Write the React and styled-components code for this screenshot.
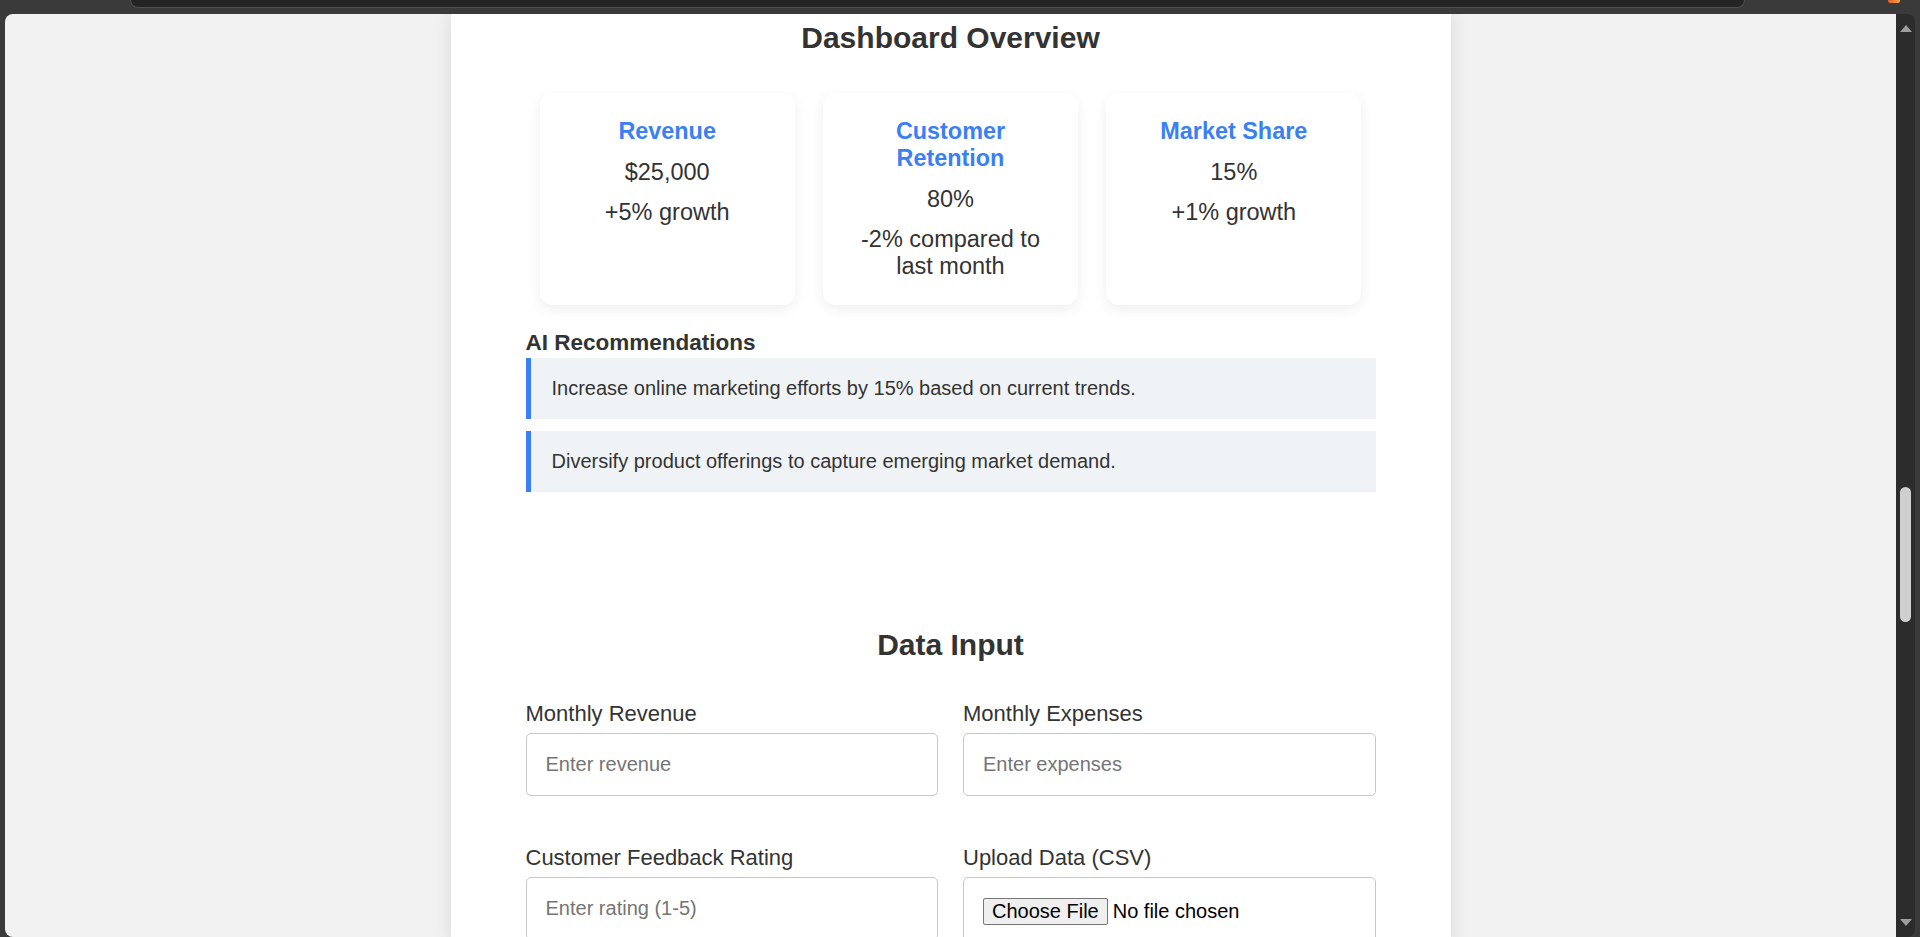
import styled, { createGlobalStyle } from 'styled-components';

const GlobalStyle = createGlobalStyle`
  * {
    box-sizing: border-box;
  }
  html,
  body {
    margin: 0;
    padding: 0;
    height: 937px;
    overflow: hidden;
    background-color: #3a3a3a;
  }
  body {
    font-family: "Liberation Sans", Arial, sans-serif;
    color: #333;
  }
`;

// browser frame
const Window = styled.div`
  display: flex;
  flex-direction: column;
  width: 1920px;
  height: 937px;
  background-color: #3a3a3a;
`;

const TopBar = styled.div`
  display: flex;
  align-items: flex-start;
  flex: none;
  height: 14px;
  padding-left: 130px;
`;

const AddressBar = styled.div`
  width: 1615px;
  height: 8px;
  background-color: #242424;
  border: 1px solid #505050;
  border-top: none;
  border-radius: 0 0 10px 10px;
`;

const ExtensionIcon = styled.div`
  width: 12px;
  height: 3px;
  margin-left: auto;
  margin-right: 20px;
  border-radius: 0 0 2px 2px;
  background: linear-gradient(90deg, #e55a2b, #f3a640);
`;

const Panel = styled.div`
  display: flex;
  flex: 1;
  min-height: 0;
  margin: 0 5px;
  border-radius: 8px;
  overflow: hidden;
`;

const Viewport = styled.div`
  flex: 1;
  min-width: 0;
  overflow: hidden;
  background-color: #f2f2f2;
`;

const Scrollbar = styled.div`
  display: flex;
  flex-direction: column;
  align-items: center;
  flex: none;
  width: 19px;
  padding: 11px 0 11px;
  background-color: #2c2c2c;
`;

const Arrow = styled.div`
  width: 0;
  height: 0;
  border-left: 6px solid transparent;
  border-right: 6px solid transparent;
  ${({ $down }) =>
    $down
      ? 'border-top: 7px solid #9d9d9d; margin-top: auto;'
      : 'border-bottom: 7px solid #9d9d9d;'}
`;

const Thumb = styled.div`
  width: 11px;
  height: 135px;
  margin-top: 455px;
  border-radius: 6px;
  background-color: #cfcfcf;
`;

// page
const Container = styled.div`
  width: 1000px;
  min-height: 100%;
  margin: 0 auto;
  padding: 7px 75px 0;
  background-color: #fff;
  box-shadow: 0 0 20px rgba(0, 0, 0, 0.1);
`;

const PageTitle = styled.h2`
  margin: 0;
  font-size: 30px;
  line-height: 34.5px;
  font-weight: bold;
  text-align: center;
  color: #333;
`;

const CardRow = styled.div`
  display: flex;
  justify-content: space-around;
  margin-top: 37.5px;
`;

const Card = styled.div`
  width: 30%;
  padding: 25px;
  border-radius: 12.5px;
  background-color: #fff;
  box-shadow: 0 4px 14px rgba(0, 0, 0, 0.07);
  text-align: center;
`;

const CardTitle = styled.h3`
  margin: 0 0 13.5px;
  font-size: 23.4px;
  line-height: 27px;
  font-weight: bold;
  color: #3b7ff6;
`;

const CardText = styled.p`
  margin: 0 0 ${({ $last }) => ($last ? '0' : '13.5px')};
  font-size: 23.5px;
  line-height: 27px;
  color: #333;
`;

const SectionHeading = styled.h3`
  margin: 25px 0 1.5px;
  font-size: 22.5px;
  line-height: 26px;
  font-weight: bold;
  color: #333;
`;

const Recommendation = styled.div`
  margin-bottom: 12.5px;
  padding: 19px 20px 19px 21px;
  border-left: 5px solid #3b7ff6;
  background-color: #f0f3f6;
  font-size: 20px;
  line-height: 23px;
  color: #333;
  &:last-child {
    margin-bottom: 0;
  }
`;

const DataSection = styled.section`
  margin-top: 136px;
`;

const FormGrid = styled.div`
  display: grid;
  grid-template-columns: 1fr 1fr;
  column-gap: 25px;
  row-gap: 49.5px;
  margin-top: 38px;
`;

const Field = styled.div`
  display: flex;
  flex-direction: column;
`;

const Label = styled.label`
  margin-bottom: 7px;
  font-size: 22px;
  line-height: 25px;
  color: #333;
`;

const Input = styled.input`
  width: 100%;
  height: 63px;
  padding: 0 19px;
  border: 1px solid #c8c8c8;
  border-radius: 5px;
  font-family: inherit;
  font-size: 20px;
  color: #333;
  background-color: #fff;
  &::placeholder {
    color: #757575;
  }
`;

const FileInput = styled.input`
  width: 100%;
  padding: 20px 19px;
  border: 1px solid #c8c8c8;
  border-radius: 5px;
  font-family: inherit;
  font-size: 20px;
  color: #000;
  background-color: #fff;
  &::file-selector-button {
    margin-right: 5px;
    padding: 1px 8px;
    border: 1px solid #767676;
    border-radius: 2px;
    background-color: #efefef;
    font-family: inherit;
    font-size: 20px;
    line-height: 23px;
    color: #000;
  }
`;

const metrics = [
  { title: 'Revenue', value: '$25,000', change: '+5% growth' },
  { title: 'Customer Retention', value: '80%', change: '-2% compared to last month' },
  { title: 'Market Share', value: '15%', change: '+1% growth' },
];

const recommendations = [
  'Increase online marketing efforts by 15% based on current trends.',
  'Diversify product offerings to capture emerging market demand.',
];

export default function App() {
  return (
    <>
      <GlobalStyle />
      <Window>
        <TopBar>
          <AddressBar />
          <ExtensionIcon />
        </TopBar>
        <Panel>
          <Viewport>
            <Container>
              <PageTitle>Dashboard Overview</PageTitle>
              <CardRow>
                {metrics.map((m) => (
                  <Card key={m.title}>
                    <CardTitle>{m.title}</CardTitle>
                    <CardText>{m.value}</CardText>
                    <CardText $last>{m.change}</CardText>
                  </Card>
                ))}
              </CardRow>

              <SectionHeading>AI Recommendations</SectionHeading>
              <div>
                {recommendations.map((r) => (
                  <Recommendation key={r}>{r}</Recommendation>
                ))}
              </div>

              <DataSection>
                <PageTitle>Data Input</PageTitle>
                <FormGrid>
                  <Field>
                    <Label htmlFor="revenue">Monthly Revenue</Label>
                    <Input id="revenue" type="number" placeholder="Enter revenue" />
                  </Field>
                  <Field>
                    <Label htmlFor="expenses">Monthly Expenses</Label>
                    <Input id="expenses" type="number" placeholder="Enter expenses" />
                  </Field>
                  <Field>
                    <Label htmlFor="rating">Customer Feedback Rating</Label>
                    <Input id="rating" type="number" placeholder="Enter rating (1-5)" />
                  </Field>
                  <Field>
                    <Label htmlFor="upload">Upload Data (CSV)</Label>
                    <FileInput id="upload" type="file" accept=".csv" />
                  </Field>
                </FormGrid>
              </DataSection>
            </Container>
          </Viewport>
          <Scrollbar>
            <Arrow />
            <Thumb />
            <Arrow $down />
          </Scrollbar>
        </Panel>
      </Window>
    </>
  );
}
